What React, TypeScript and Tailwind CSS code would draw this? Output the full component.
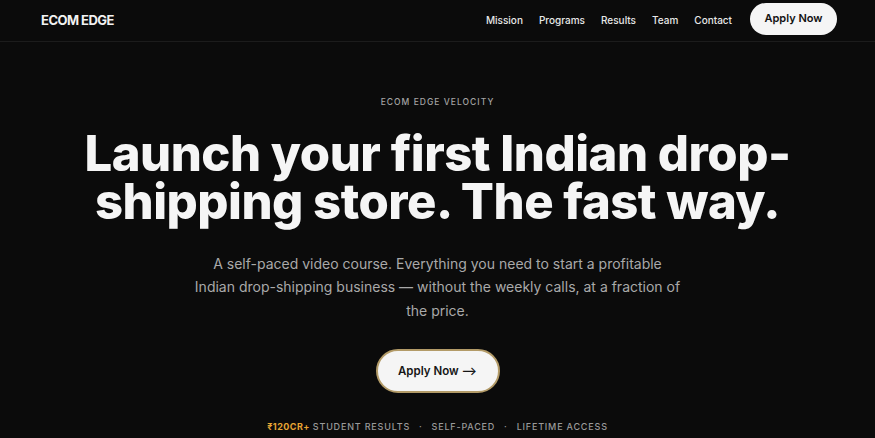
import React from "react";

export default function App() {
  return (
    <div className="min-h-[438px] w-full bg-[#0b0b0b] text-white" style={{ fontFamily: "Inter, 'Noto Sans', sans-serif" }}>
      <header className="flex h-[42px] items-center justify-between border-b border-[#1c1c1c] pl-[41px] pr-[38px]">
        <div className="text-[13px] font-bold tracking-[-0.04em] text-[#f2f2f2]">ECOM EDGE</div>
        <nav className="flex items-center">
          <div className="flex items-center gap-[16px] text-[10px] font-medium text-[#e8e8e8]">
            <a>Mission</a>
            <a>Programs</a>
            <a>Results</a>
            <a>Team</a>
            <a>Contact</a>
          </div>
          <button className="ml-[18px] mt-[-4px] h-[32px] w-[87px] rounded-full bg-[#f5f5f5] text-[11px] font-semibold text-[#111]">
            Apply Now
          </button>
        </nav>
      </header>
      <main className="flex flex-col items-center pt-[54px] text-center">
        <div className="text-[8.5px] font-medium tracking-[0.12em] text-[#a3a3a3]">ECOM EDGE VELOCITY</div>
        <h1 className="mt-[21px] w-[840px] text-[49px] font-extrabold leading-[48px] tracking-[-0.01em] text-[#f5f5f5]">
          Launch your first Indian drop-
          <br />
          shipping store. The fast way.
        </h1>
        <p className="mt-[26px] w-[560px] text-[14px] leading-[23.5px] text-[#a9a9a9]">
          A self-paced video course. Everything you need to start a profitable
          <br />
          Indian drop-shipping business — without the weekly calls, at a fraction of
          <br />
          the price.
        </p>
        <button className="mt-[27px] h-[44px] w-[124px] rounded-full border-2 border-[#b39b68] bg-[#f5f5f5] text-[11.5px] font-semibold text-[#151515]">
          Apply Now ⟶
        </button>
        <div className="mt-[27px] flex items-center text-[9px] font-medium tracking-[0.09em] text-[#9a9a9a]">
          <span className="mr-[3px] font-bold tracking-[0.05em] text-[#e8a534]">₹120CR+</span>
          <span>STUDENT RESULTS</span>
          <span className="mx-[9px]">·</span>
          <span>SELF-PACED</span>
          <span className="mx-[9px]">·</span>
          <span>LIFETIME ACCESS</span>
        </div>
      </main>
    </div>
  );
}
